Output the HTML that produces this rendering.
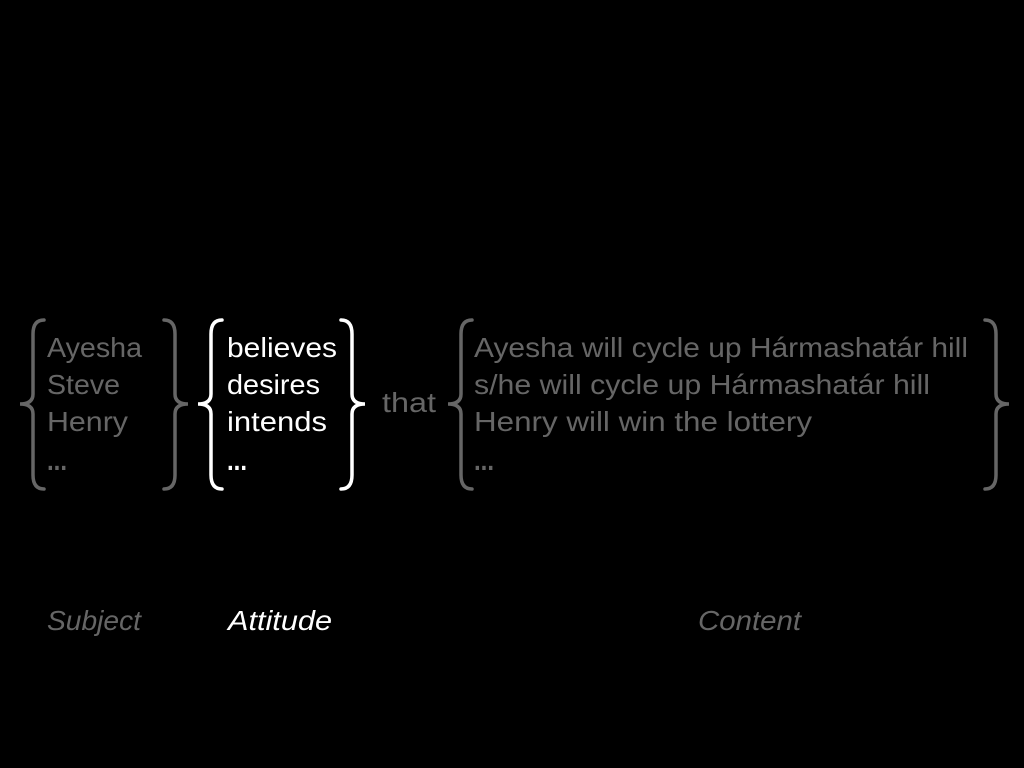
<!DOCTYPE html>
<html><head><meta charset="utf-8"><style>html,body{margin:0;padding:0;background:#000;}svg{display:block}</style></head>
<body>
<svg width="1024" height="768" viewBox="0 0 1024 768" xmlns="http://www.w3.org/2000/svg" font-family="Liberation Sans, sans-serif" font-size="28">
<rect width="1024" height="768" fill="#000"/>
<g fill="none" stroke-width="3.5" stroke-linecap="round">
<path stroke="#666" d="M44 320 Q33 320 33 334 L33 394 Q33 404 20 404 Q33 404 33 414 L33 475 Q33 489 44 489"/>
<path stroke="#666" d="M164 320 Q175 320 175 334 L175 394 Q175 404 188 404 Q175 404 175 414 L175 475 Q175 489 164 489"/>
<path stroke="#fff" d="M222 320 Q211 320 211 334 L211 394 Q211 404 198 404 Q211 404 211 414 L211 475 Q211 489 222 489"/>
<path stroke="#fff" d="M341 320 Q352 320 352 334 L352 394 Q352 404 365 404 Q352 404 352 414 L352 475 Q352 489 341 489"/>
<path stroke="#666" d="M472 320 Q461 320 461 334 L461 394 Q461 404 448 404 Q461 404 461 414 L461 475 Q461 489 472 489"/>
<path stroke="#666" d="M985 320 Q996 320 996 334 L996 394 Q996 404 1009 404 Q996 404 996 414 L996 475 Q996 489 985 489"/>
</g>
<g fill="#666">
<text x="47" y="357" textLength="95" lengthAdjust="spacingAndGlyphs">Ayesha</text>
<text x="47" y="394" textLength="73" lengthAdjust="spacingAndGlyphs">Steve</text>
<text x="47" y="431" textLength="81" lengthAdjust="spacingAndGlyphs">Henry</text>
<text x="47" y="470" textLength="20" lengthAdjust="spacingAndGlyphs" font-weight="bold">...</text>
<text x="382" y="412" textLength="54" lengthAdjust="spacingAndGlyphs">that</text>
<text x="474" y="357" textLength="494" lengthAdjust="spacingAndGlyphs">Ayesha will cycle up Hármashatár hill</text>
<text x="474" y="394" textLength="456" lengthAdjust="spacingAndGlyphs">s/he will cycle up Hármashatár hill</text>
<text x="474" y="431" textLength="338" lengthAdjust="spacingAndGlyphs">Henry will win the lottery</text>
<text x="474" y="470" textLength="20" lengthAdjust="spacingAndGlyphs" font-weight="bold">...</text>
<text x="47" y="630" font-style="italic" textLength="94" lengthAdjust="spacingAndGlyphs">Subject</text>
<text x="698" y="630" font-style="italic" textLength="103" lengthAdjust="spacingAndGlyphs">Content</text>
</g>
<g fill="#fff">
<text x="227" y="357" textLength="110" lengthAdjust="spacingAndGlyphs">believes</text>
<text x="227" y="394" textLength="93" lengthAdjust="spacingAndGlyphs">desires</text>
<text x="227" y="431" textLength="100" lengthAdjust="spacingAndGlyphs">intends</text>
<text x="227" y="470" textLength="20" lengthAdjust="spacingAndGlyphs" font-weight="bold">...</text>
<text x="228" y="630" font-style="italic" textLength="104" lengthAdjust="spacingAndGlyphs">Attitude</text>
</g>
</svg>
</body></html>
